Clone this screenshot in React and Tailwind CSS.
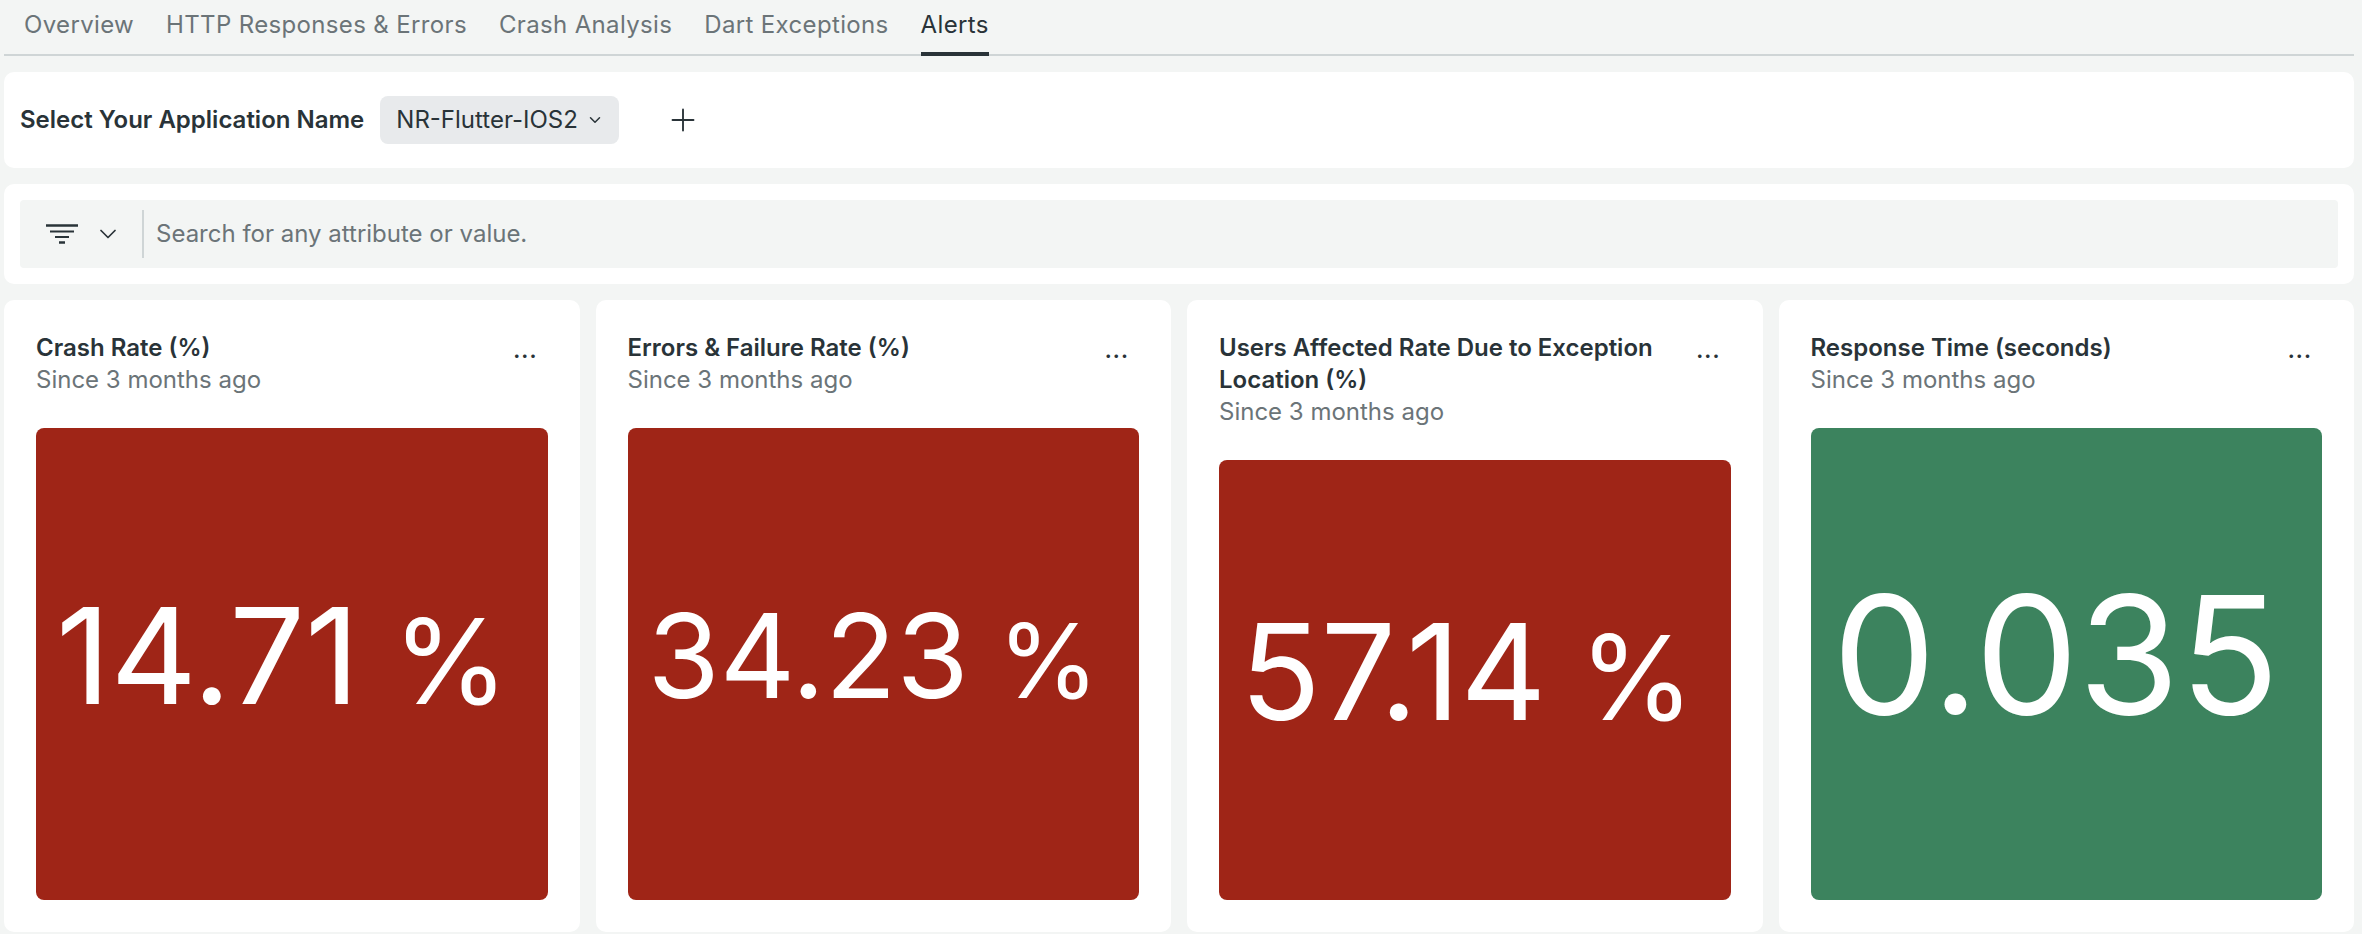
import { ChevronDown, Plus } from 'lucide-react';

const tabs = ['Overview', 'HTTP Responses & Errors', 'Crash Analysis', 'Dart Exceptions', 'Alerts'];

const cards = [
  { title: 'Crash Rate (%)', value: '14.71', unit: '%', tile: 'bg-[#9f2517] pl-[20px]', size: 'text-[134px]' },
  { title: 'Errors & Failure Rate (%)', value: '34.23', unit: '%', tile: 'bg-[#9f2517] pl-[20px]', size: 'text-[117px]' },
  { title: 'Users Affected Rate Due to Exception Location (%)', value: '57.14', unit: '%', tile: 'bg-[#9f2517] pl-[21px]', size: 'text-[133px]' },
  { title: 'Response Time (seconds)', value: '0.035', tile: 'bg-[#3c835e] pl-[22px]', size: 'text-[164px]' },
];

function FilterIcon() {
  return (
    <svg width="32" height="20" viewBox="0 0 32 20" fill="none" stroke="#293338">
      <path d="M0 1.5h32" strokeWidth="2.5" />
      <path d="M4 7.5h24" strokeWidth="2" />
      <path d="M9 13h14" strokeWidth="2" />
      <path d="M13 18.5h6" strokeWidth="2.5" />
    </svg>
  );
}

function MetricCard({ title, value, unit, tile, size }) {
  return (
    <div className="flex-1 min-w-0 h-[632px] bg-white rounded-[10px] px-8 pt-8 pb-8 flex flex-col">
      <div className="flex items-start justify-between mb-8">
        <div className="min-w-0">
          <h3 className="text-[24px] leading-8 font-semibold text-[#293338]">{title}</h3>
          <p className="text-[24px] leading-8 text-[#6b7478]">Since 3 months ago</p>
        </div>
        <span className="ml-8 mr-[10px] mt-[3px] text-[21px] leading-8 font-bold text-[#293338] tracking-wider shrink-0">...</span>
      </div>
      <div className={`flex-1 ${tile} rounded-lg flex items-center pb-[18px]`}>
        <span className={`${size} text-white leading-none whitespace-nowrap`}>
          {value}
          {unit && <span className="text-[0.88em]"> {unit}</span>}
        </span>
      </div>
    </div>
  );
}

export default function App() {
  return (
    <div className="w-[2362px] h-[934px] overflow-hidden bg-[#f3f5f4] pl-1 pr-2 font-['Inter',sans-serif]">
      <nav className="flex gap-8 h-14 border-b-2 border-[#cfd5d6] pl-5 text-[24px] tracking-[0.35px]">
        {tabs.map((tab) => (
          <div
            key={tab}
            className={`h-14 pt-[9px] leading-8 ${tab === 'Alerts' ? 'border-b-4 border-[#293338] text-[#293338]' : 'text-[#6b7478]'}`}
          >
            {tab}
          </div>
        ))}
      </nav>

      <div className="mt-4 h-24 bg-white rounded-[10px] flex items-center pl-4">
        <span className="text-[24px] font-semibold text-[#293338]">Select Your Application Name</span>
        <div className="ml-4 h-12 pl-4 pr-[15px] rounded-lg bg-[#e8eaec] flex items-center gap-2 text-[24px] text-[#293338]">
          NR-Flutter-IOS2
          <ChevronDown size={18} strokeWidth={2} />
        </div>
        <Plus size={36} strokeWidth={1.25} className="ml-[46px] text-[#293338]" />
      </div>

      <div className="mt-4 h-[100px] bg-white rounded-[10px] flex items-center px-4">
        <div className="flex-1 h-[68px] bg-[#f3f5f4] rounded flex items-center pl-[26px]">
          <FilterIcon />
          <ChevronDown size={28} strokeWidth={1.5} className="ml-4 text-[#293338]" />
          <div className="ml-5 w-0.5 h-12 bg-[#cfd5d6]" />
          <span className="ml-3 text-[24px] text-[#6b7478]">Search for any attribute or value.</span>
        </div>
      </div>

      <div className="mt-4 flex gap-4">
        {cards.map((card) => (
          <MetricCard key={card.title} {...card} />
        ))}
      </div>
    </div>
  );
}
